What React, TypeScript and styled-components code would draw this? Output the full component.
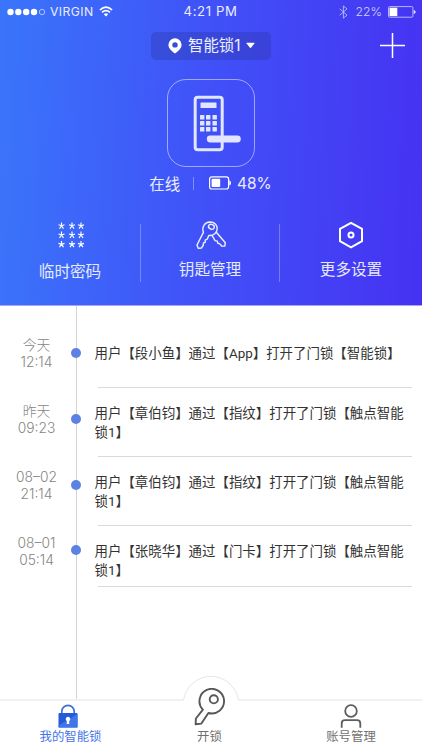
import * as React from 'react';
import styled, { createGlobalStyle } from 'styled-components';

const GlobalStyle = createGlobalStyle`
  * {
    box-sizing: border-box;
  }
  body {
    margin: 0;
    background: #fff;
    font-family: Inter, 'Noto Sans CJK SC', sans-serif;
    text-spacing-trim: space-all;
  }
  svg {
    display: block;
    flex-shrink: 0;
  }
`;

const Screen = styled.div`
  width: 422px;
  height: 750px;
  display: flex;
  flex-direction: column;
  overflow: hidden;
`;

const Header = styled.header`
  height: 306px;
  flex-shrink: 0;
  display: flex;
  flex-direction: column;
  color: #e9edff;
  background: linear-gradient(93deg, #3a75fa 0%, #4053f8 46%, #4632f2 100%);
  border-bottom: 1px solid #a9a6f6;
`;

const StatusBar = styled.div`
  height: 23px;
  display: grid;
  grid-template-columns: 1fr auto 1fr;
  align-items: center;
  padding: 0 6px 0 7px;
  font-size: 13px;
  line-height: 23px;
`;

const StatusGroup = styled.div<{ $end?: boolean }>`
  display: flex;
  align-items: center;
  justify-content: ${({ $end }) => ($end ? 'flex-end' : 'flex-start')};
`;

const Carrier = styled.span`
  font-size: 12.2px;
  letter-spacing: 0.4px;
  margin: 0 6px 0 4px;
`;

const Clock = styled.span`
  font-size: 13.2px;
  letter-spacing: 0.6px;
  margin-right: 2px;
`;

const Percent = styled.span`
  font-size: 12.2px;
  font-weight: 300;
  margin: 0 6px 0 8px;
  opacity: 0.85;
`;

const TitleBar = styled.div`
  height: 45px;
  display: grid;
  grid-template-columns: 1fr 120px 1fr;
  align-items: center;
  padding-right: 17px;
  padding-left: 17px;
  > svg {
    justify-self: end;
  }
`;

const DevicePicker = styled.button`
  grid-column: 2;
  height: 28px;
  border: none;
  border-radius: 5px;
  padding: 0 0 0 17px;
  display: flex;
  align-items: center;
  background: rgba(40, 50, 150, 0.3);
  color: #edf0ff;
  font-family: inherit;
  font-size: 15.4px;
  line-height: 28px;
  white-space: nowrap;
  span {
    margin: 0 6px;
  }
`;

const DeviceTile = styled.div`
  width: 88px;
  height: 88px;
  margin: 11px auto 0;
  border: 1px solid rgba(255, 255, 255, 0.5);
  border-radius: 19px;
`;

const DeviceStatus = styled.div`
  height: 32px;
  padding-right: 1px;
  display: flex;
  align-items: center;
  justify-content: center;
  font-size: 15.4px;
  svg {
    margin-right: 6px;
  }
`;

const StatusDivider = styled.i`
  width: 1px;
  height: 13px;
  margin: 0 15px 0 13px;
  background: rgba(255, 255, 255, 0.35);
`;

const ActionRow = styled.div`
  height: 53px;
  margin-top: 25px;
  display: grid;
  grid-template-columns: 141px 139px 142px;
`;

const Action = styled.button<{ $gap: number }>`
  border: none;
  border-right: 1px solid rgba(255, 255, 255, 0.28);
  background: none;
  padding: 0;
  display: flex;
  flex-direction: column;
  align-items: center;
  color: #e6eaff;
  font-family: inherit;
  font-size: 15.6px;
  line-height: 20px;
  &:last-child {
    border-right: none;
  }
  svg {
    margin-top: -3px;
    margin-bottom: ${({ $gap }) => $gap}px;
  }
`;

const History = styled.main`
  flex: 1;
  display: flex;
`;

const TimeColumn = styled.ol`
  width: 77px;
  margin: 0;
  padding: 28px 0 0;
  list-style: none;
  border-right: 1px solid #d3d3d3;
`;

const TimeItem = styled.li`
  height: 65.8px;
  display: flex;
  time {
    width: 73px;
    padding-top: 3.4px;
    display: flex;
    flex-direction: column;
    align-items: center;
    color: #858585;
    font-size: 13.8px;
    font-weight: 300;
    line-height: 17px;
  }
`;

const Dot = styled.i`
  width: 10px;
  height: 10px;
  margin-top: 14px;
  margin-left: -2px;
  margin-right: -10px;
  flex-shrink: 0;
  border-radius: 50%;
  background: #5d83e2;
`;

const MessageColumn = styled.ul`
  margin: 0;
  padding: 0 0 0 21px;
  list-style: none;
`;

const Message = styled.li<{ $height: number; $top: number }>`
  width: 314px;
  height: ${({ $height }) => $height}px;
  padding-top: ${({ $top }) => $top}px;
  border-bottom: 1px solid #d9d9d9;
  color: #333;
  font-family: Roboto, 'Noto Sans CJK SC', sans-serif;
  font-size: 13.45px;
  line-height: 19px;
  p {
    margin: 0 0 0 -3.5px;
    width: 314px;
  }
`;

const TabBar = styled.nav`
  height: 51px;
  flex-shrink: 0;
  display: grid;
  grid-template-columns: 141px 139px 142px;
  grid-template-rows: 49px;
  border-top: 2px solid #f1f1f1;
  background: #fff;
`;

const Tab = styled.button<{ $active?: boolean }>`
  position: relative;
  border: none;
  background: none;
  padding: 0 0 4px;
  display: flex;
  flex-direction: column;
  align-items: center;
  justify-content: flex-end;
  color: ${({ $active }) => ($active ? '#4674e6' : '#707070')};
  font-family: inherit;
  font-size: 12.4px;
  line-height: 18px;
  > svg {
    position: relative;
    margin-right: ${({ $active }) => ($active ? '5px' : '0')};
  }
`;

const UnlockTab = styled(Tab)`
  padding-right: 2px;
  > svg {
    margin-bottom: 2px;
  }
`;

const Bump = styled.span`
  position: absolute;
  top: -25px;
  left: 50%;
  width: 56px;
  height: 25px;
  margin-left: -28px;
`;

const SignalDots = () => (
  <svg width="39" height="10" fill="#fff">
    {[3.5, 11.3, 19.2, 27].map((x) => (
      <circle key={x} cx={x} cy="5" r="3.2" />
    ))}
    <circle cx="35" cy="5" r="2.7" fill="none" stroke="#dce4ff" strokeWidth=".7" />
  </svg>
);

const WifiIcon = () => (
  <svg width="14" height="11" fill="none" stroke="#fff" strokeWidth="1.7">
    <path d="M.9 4Q7-1.7 13.1 4" />
    <path d="M3 6.4Q7 3 11 6.4" />
    <path d="M4.8 8.2Q7 6.3 9.2 8.2L7 10.6Z" fill="#fff" stroke="none" />
  </svg>
);

const BluetoothIcon = () => (
  <svg width="9" height="14" fill="none" stroke="#b9bdfb" strokeWidth=".9">
    <path d="M.7 3.8 8 10.2 4.4 13.2V.9L8 3.9.7 10.2" />
  </svg>
);

const PhoneBatteryIcon = () => (
  <svg width="28" height="12">
    <rect x=".5" y=".6" width="24.4" height="10.6" rx="1" fill="none" stroke="#b6b6fb" />
    <rect x="1.5" y="1.7" width="7.8" height="8.4" fill="#fff" />
    <path d="M25.7 4v4q2-.5 2-2t-2-2" fill="#dddffe" />
  </svg>
);

const PinIcon = () => (
  <svg width="14" height="16" fill="#fff" fillRule="evenodd">
    <path d="M7 .3a6.5 6.5 0 0 0-6.6 6.5C.4 10.5 4 13.5 7 15.6c3-2.1 6.6-5.1 6.6-8.8A6.5 6.5 0 0 0 7 .3ZM7 4.2a2.7 2.7 0 1 1 0 5.4 2.7 2.7 0 0 1 0-5.4Z" />
  </svg>
);

const CaretIcon = () => (
  <svg width="9" height="7" fill="#fff">
    <path d="M.9.8h7.2q.8 0 .3.7L5 5.8q-.5.6-1 0L.6 1.5Q.1.8.9.8Z" />
  </svg>
);

const PlusIcon = () => (
  <svg width="25" height="25" stroke="#fff" strokeWidth="1.5">
    <path d="M12.5 0v25M0 12.5h25" />
  </svg>
);

const DoorLockIcon = () => (
  <svg width="86" height="86" fill="#e2e7ff">
    <rect x="27.2" y="17.3" width="27" height="52.5" rx="2.5" fill="none" stroke="#e2e7ff" strokeWidth="3" />
    <rect x="32.5" y="22.5" width="16" height="5.5" rx=".5" />
    {[35, 41, 47].map((y) =>
      [32, 38, 44.5].map((x) => (
        <rect key={`${x}-${y}`} x={x} y={y} width="4.4" height="4.4" rx=".5" />
      )),
    )}
    <rect x="38.8" y="55.6" width="34" height="6.8" rx="3.4" />
  </svg>
);

const LockBatteryIcon = () => (
  <svg width="22" height="14">
    <rect x=".6" y=".8" width="19" height="12.2" rx="2.2" fill="none" stroke="#fff" strokeWidth="1.2" />
    <rect x="2.6" y="2.8" width="8.6" height="8.2" rx="1" fill="#fff" />
    <path d="M20.3 4.2v5.4q1.7-.6 1.7-2.7t-1.7-2.7" fill="#fff" />
  </svg>
);

const PasswordIcon = () => (
  <svg width="28" height="28" stroke="#fff" strokeWidth="1.15">
    {[4.8, 14, 23.4].map((y) =>
      [5.5, 16, 25].map((x) => (
        <path
          key={`${x}-${y}`}
          d={`M${x} ${y}v-3.4M${x} ${y}l3-1M${x} ${y}l2 2.8M${x} ${y}l-2 2.8M${x} ${y}l-3-1`}
        />
      )),
    )}
  </svg>
);

const KeysIcon = () => (
  <svg width="32" height="30" fill="none" stroke="#eef1ff" strokeWidth="1.4" strokeLinejoin="round">
    <path d="M9.4 11.4C7.6 6 10.6 1.2 16 1c4.6 0 7.4 3 7.2 6.8-.2 4-3.4 7-8.4 6.6l-1.6 3.8-2 .9.1 2.1-2 1 .1 1.8-2 3.1-3.2.2L3 24Z" />
    <ellipse cx="17.4" cy="5.8" rx="3" ry="2.3" transform="rotate(25 17.4 5.8)" />
    <path d="m22.3 11.3 9 10.5-.5 3.3-3.2-.1-2-2.4-1.8-.3-.5-2.2-2.2-.5-3-4.9" />
  </svg>
);

const SettingsIcon = () => (
  <svg width="26" height="28" fill="none" stroke="#fff">
    <path d="M13 1.8 24 7.9v12.3l-11 6.1-11-6.1V7.9Z" strokeWidth="2" />
    <circle cx="13" cy="14" r="2.5" strokeWidth="2" />
  </svg>
);

const PadlockIcon = () => (
  <svg width="20" height="24">
    <path d="M3.8 10V7.5a6.2 6.2 0 0 1 12.4 0V10" fill="none" stroke="#3f70d8" strokeWidth="1.7" />
    <rect x=".5" y="9" width="19" height="14.6" rx="1.2" fill="#235bd8" />
    <path d="M.5 21.5 19.5 10v12.4q0 1.2-1.2 1.2H1.7q-1.2 0-1.2-1.2Z" fill="#3f76ea" />
    <path d="M10 12.7a2.4 2.4 0 0 0-1.2 4.4V20h2.4v-2.9A2.4 2.4 0 0 0 10 12.7Z" fill="#fff" />
  </svg>
);

const OpenKeyIcon = () => (
  <svg width="32" height="38" fill="none" stroke="#585858" strokeWidth="1.9">
    <path d="M8.9 21.7A12.3 12.3 0 1 1 14.4 25L7.4 35.6 1.6 36.3l.3-5.8Z" strokeLinejoin="round" />
    <circle cx="19.8" cy="11.3" r="4.1" />
  </svg>
);

const AccountIcon = () => (
  <svg width="22" height="24" fill="none" stroke="#5d5d5d" strokeWidth="1.8">
    <circle cx="11" cy="7" r="5.8" />
    <path d="M1.7 23.7v-4.2q0-3.3 3.3-3.3h12q3.3 0 3.3 3.3v4.2" />
  </svg>
);

interface LogEntry {
  day: string;
  time: string;
  message: string;
  height: number;
  top: number;
}

const logs: LogEntry[] = [
  { day: '今天', time: '12:14', message: '用户【段小鱼】通过【App】打开了门锁【智能锁】', height: 82, top: 38 },
  { day: '昨天', time: '09:23', message: '用户【章伯钧】通过【指纹】打开了门锁【触点智能锁1】', height: 69, top: 16 },
  { day: '08–02', time: '21:14', message: '用户【章伯钧】通过【指纹】打开了门锁【触点智能锁1】', height: 69, top: 16 },
  { day: '08–01', time: '05:14', message: '用户【张晓华】通过【门卡】打开了门锁【触点智能锁1】', height: 61, top: 16 },
];

const App: React.FC = () => {
  return (
    <Screen>
      <GlobalStyle />
      <Header>
        <StatusBar>
          <StatusGroup>
            <SignalDots />
            <Carrier>VIRGIN</Carrier>
            <WifiIcon />
          </StatusGroup>
          <Clock>4:21 PM</Clock>
          <StatusGroup $end>
            <BluetoothIcon />
            <Percent>22%</Percent>
            <PhoneBatteryIcon />
          </StatusGroup>
        </StatusBar>
        <TitleBar>
          <DevicePicker>
            <PinIcon />
            <span>智能锁1</span>
            <CaretIcon />
          </DevicePicker>
          <PlusIcon />
        </TitleBar>
        <DeviceTile>
          <DoorLockIcon />
        </DeviceTile>
        <DeviceStatus>
          在线
          <StatusDivider />
          <LockBatteryIcon />
          48%
        </DeviceStatus>
        <ActionRow>
          <Action $gap={13}>
            <PasswordIcon />
            临时密码
          </Action>
          <Action $gap={9}>
            <KeysIcon />
            钥匙管理
          </Action>
          <Action $gap={11}>
            <SettingsIcon />
            更多设置
          </Action>
        </ActionRow>
      </Header>
      <History>
        <TimeColumn>
          {logs.map(({ day, time }) => (
            <TimeItem key={day}>
              <time>
                <span>{day}</span>
                <span>{time}</span>
              </time>
              <Dot />
            </TimeItem>
          ))}
        </TimeColumn>
        <MessageColumn>
          {logs.map(({ day, message, height, top }) => (
            <Message key={day} $height={height} $top={top}>
              <p>{message}</p>
            </Message>
          ))}
        </MessageColumn>
      </History>
      <TabBar>
        <Tab $active>
          <PadlockIcon />
          我的智能锁
        </Tab>
        <UnlockTab>
          <Bump>
            <svg width="56" height="25">
              <path d="M.4 25A27.7 27.7 0 0 1 55.6 25Z" fill="#fff" />
              <path d="M.6 24A27.7 27.7 0 0 1 55.4 24" fill="none" stroke="#e6e6e6" />
            </svg>
          </Bump>
          <OpenKeyIcon />
          开锁
        </UnlockTab>
        <Tab>
          <AccountIcon />
          账号管理
        </Tab>
      </TabBar>
    </Screen>
  );
};

export default App;
